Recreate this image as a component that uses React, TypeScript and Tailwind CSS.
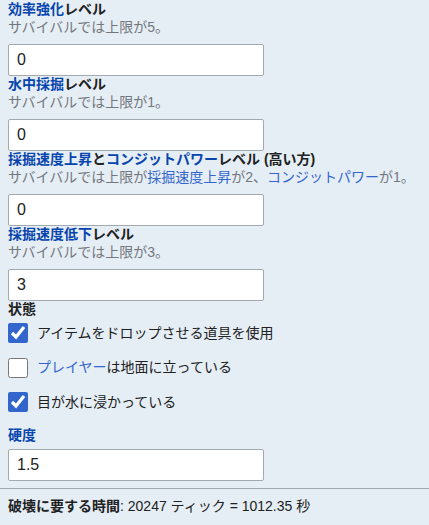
import { useState } from 'react'

type FieldProps = {
  label: React.ReactNode
  hint?: React.ReactNode
  value: string
}

function L({ children }: { children: React.ReactNode }) {
  return <a className="text-[#0645ad]">{children}</a>
}

function H({ children }: { children: React.ReactNode }) {
  return <a className="text-[#3366cc]">{children}</a>
}

function Field({ label, hint, value }: FieldProps) {
  const [v, setV] = useState(value)
  return (
    <div>
      <div className="font-bold leading-[17px]">{label}</div>
      {hint ? (
        <div className="mt-[1px] mb-[8px] leading-[17px] text-[#72777d]">
          {hint}
        </div>
      ) : (
        <div className="h-[5px]" />
      )}
      <input
        value={v}
        onChange={(e) => setV(e.target.value)}
        className="block h-[32px] w-[256px] rounded-[2px] border border-[#a2a9b1] bg-white px-2 text-[16px] text-[#202122] outline-none"
      />
    </div>
  )
}

function Check({
  checked,
  children,
}: {
  checked: boolean
  children: React.ReactNode
}) {
  const [c, setC] = useState(checked)
  return (
    <label className="flex h-5 items-center gap-[9px] leading-[17px]">
      <input
        type="checkbox"
        checked={c}
        onChange={() => setC(!c)}
        className="h-5 w-5 shrink-0 accent-[#3366cc]"
      />
      <span>{children}</span>
    </label>
  )
}

export default function App() {
  return (
    <div className="min-h-[525px] bg-[#e6eef5] font-['Liberation_Sans','Noto_Sans_CJK_JP',sans-serif] text-[14px] text-[#202122]">
      <div className="pl-2 pt-[1px]">
        <Field
          label={
            <>
              <L>効率強化</L>レベル
            </>
          }
          hint="サバイバルでは上限が5。"
          value="0"
        />
        <Field
          label={
            <>
              <L>水中採掘</L>レベル
            </>
          }
          hint="サバイバルでは上限が1。"
          value="0"
        />
        <Field
          label={
            <>
              <L>採掘速度上昇</L>と<L>コンジットパワー</L>レベル (高い方)
            </>
          }
          hint={
            <>
              サバイバルでは上限が<H>採掘速度上昇</H>が2、
              <H>コンジットパワー</H>が1。
            </>
          }
          value="0"
        />
        <Field
          label={
            <>
              <L>採掘速度低下</L>レベル
            </>
          }
          hint="サバイバルでは上限が3。"
          value="3"
        />

        <div className="font-bold leading-[17px]">状態</div>
        <div className="mt-[5px] flex flex-col gap-[14.5px]">
          <Check checked>アイテムをドロップさせる道具を使用</Check>
          <Check checked={false}>
            <H>プレイヤー</H>は地面に立っている
          </Check>
          <Check checked>目が水に浸かっている</Check>
        </div>

        <div className="mt-[15px]">
          <Field label={<L>硬度</L>} value="1.5" />
        </div>
      </div>

      <hr className="mt-[7px] border-[#a2a9b1]" />

      <p className="mt-[9px] pl-2 leading-[17px]">
        <b>破壊に要する時間</b>: 20247 ティック = 1012.35 秒
      </p>
    </div>
  )
}
